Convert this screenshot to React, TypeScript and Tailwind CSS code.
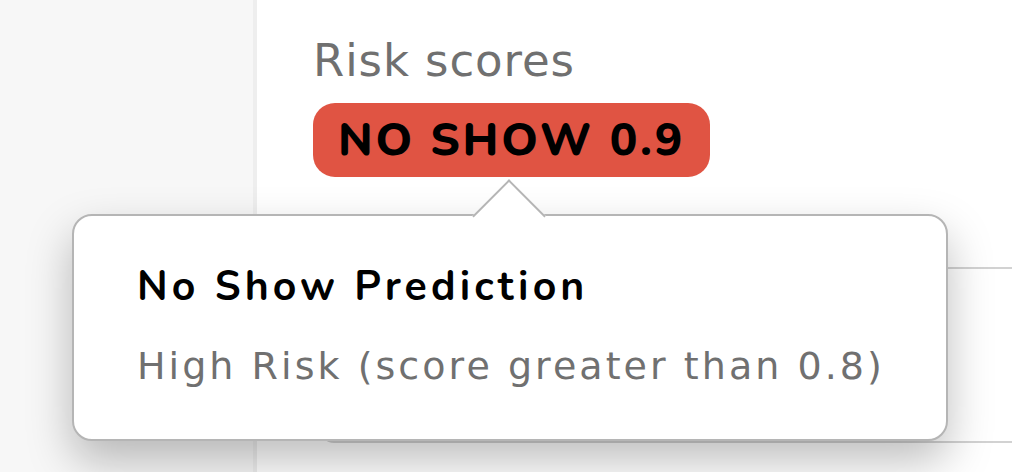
import React from "react";

const wide = { fontFamily: '"DejaVu Sans", Verdana, sans-serif' };

function RiskBadge({ label, score }: { label: string; score: number }) {
  return (
    <div className="inline-flex h-[74px] items-center rounded-[22px] bg-[#e05443] px-[25px]">
      <span className="font-['Nunito','Open_Sans',sans-serif] text-[46px] leading-none font-extrabold tracking-[0.06em] text-black">
        {label} {score}
      </span>
    </div>
  );
}

function Tooltip() {
  return (
    <div className="absolute top-[214px] left-[72px] z-10 h-[227px] w-[876px] rounded-[20px] border-2 border-[#b5b5b5] bg-white pt-[50px] pl-[63px] shadow-[0_20px_45px_rgba(0,0,0,0.26)]">
      {/* arrow */}
      <div className="absolute top-[-26px] left-[409px] size-[52px] rotate-45 border-t-2 border-l-2 border-[#b5b5b5] bg-white" />
      <p className="relative font-['Nunito','Open_Sans',sans-serif] text-[41px] leading-none font-bold tracking-[0.1em] text-black">
        No Show Prediction
      </p>
      <p className="relative mt-[40px] text-[38px] leading-none tracking-[0.08em] text-[#707070]" style={wide}>
        High Risk (score greater than 0.8)
      </p>
    </div>
  );
}

export default function App() {
  return (
    <div className="relative flex h-[472px] w-[1012px] overflow-hidden bg-white">
      <aside className="w-[257px] shrink-0 border-r-4 border-[#eeeeee] bg-[#f7f7f7]" />
      <main className="flex-1 pt-[38px] pl-[56px]">
        <h2 className="text-[45px] leading-none tracking-[0.02em] text-[#707070]" style={wide}>
          Risk scores
        </h2>
        <div className="mt-[20px]">
          <RiskBadge label="NO SHOW" score={0.9} />
        </div>
        <div className="mt-[90px] ml-[7px] h-[176px] rounded-bl-[14px] border-t-2 border-b-2 border-[#d2d2d2]" />
      </main>
      <Tooltip />
    </div>
  );
}
